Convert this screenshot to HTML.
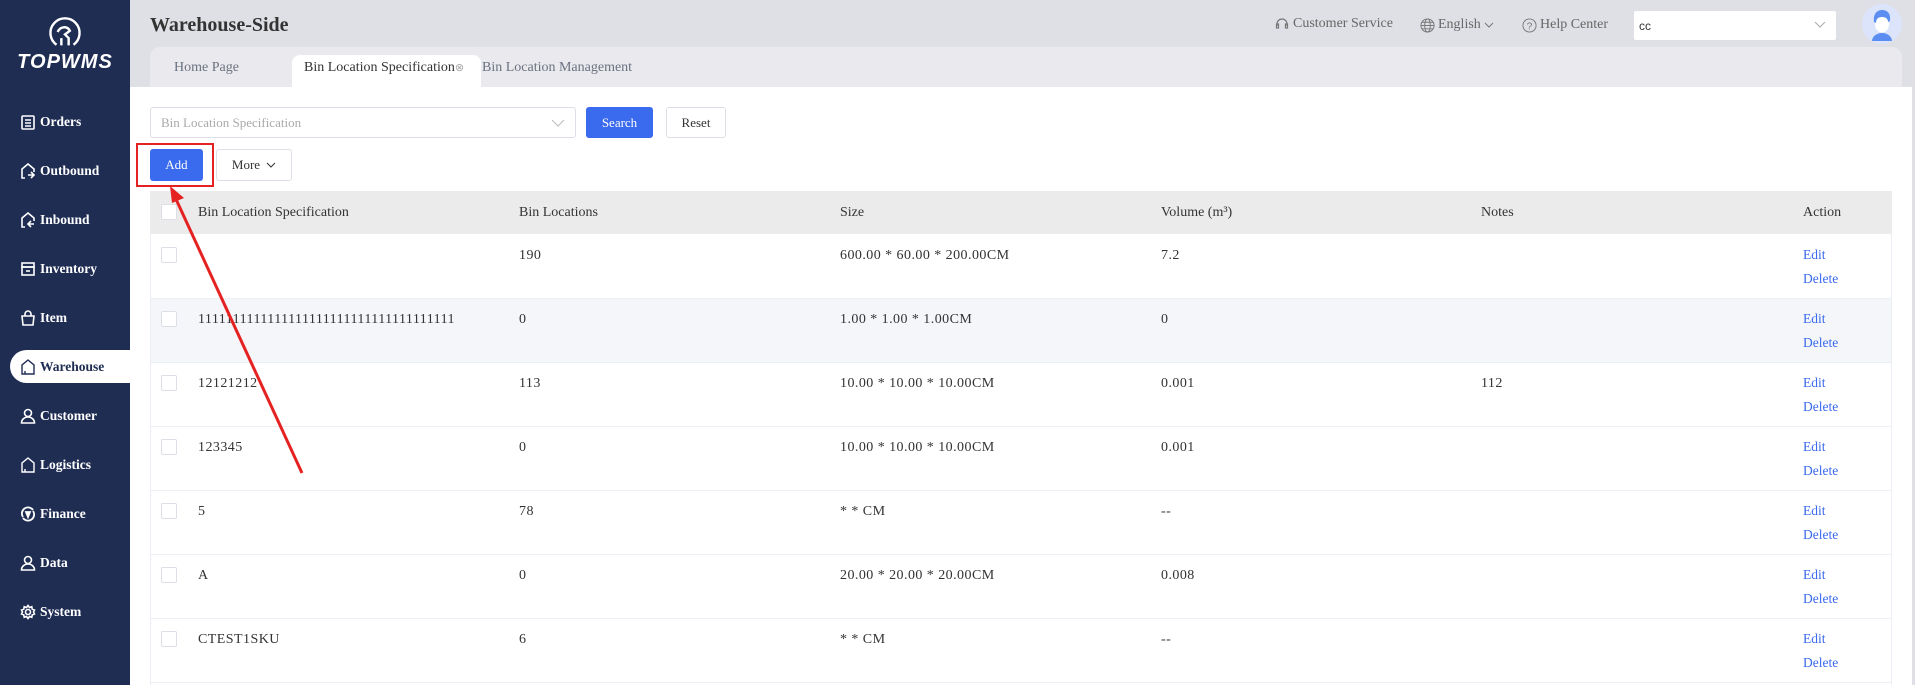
<!DOCTYPE html>
<html><head><meta charset="utf-8"><style>
*{margin:0;padding:0;box-sizing:border-box}
body{width:1915px;height:685px;overflow:hidden;background:#dfe0e6;font-family:"Liberation Serif",serif;font-size:14px;color:#333;position:relative}
.abs{position:absolute}
.side{left:0;top:0;width:130px;height:685px;background:#1f2d53}
.mi{position:absolute;left:20px;color:#fff;font-weight:bold;font-size:13.5px;display:flex;align-items:center;gap:4px;height:20px}
.mi svg{width:16px;height:16px}
.act{left:10px;width:120px;height:33px;background:#fff;border-radius:17px 0 0 17px;color:#1f2d53;padding-left:10px}
.tabbar{left:150px;top:47px;width:1752px;height:40px;background:#e9e9ee;border-radius:10px 10px 0 0}
.content{left:130px;top:87px;width:1782px;height:598px;background:#fff}
.btn{position:absolute;border-radius:3px;font-size:13px;display:flex;align-items:center;justify-content:center}
.th{left:150px;top:191px;width:1742px;height:43px;background:#ebebeb}
.cell{position:absolute;font-size:14px;color:#333}
.dc{letter-spacing:0.45px}
.cb{position:absolute;width:16px;height:16px;border:1px solid #dcdfe6;background:#fff;border-radius:2px}
.line{position:absolute;left:150px;width:1742px;height:1px;background:#ebeef5}
a{color:#3a6aed;text-decoration:none}
</style></head><body>
<div class="abs side">
  <svg class="abs" style="left:48px;top:15px" width="34" height="34" viewBox="0 0 28 28" fill="none" stroke="#fff" stroke-width="2"><path d="M7 24.5A12 12 0 1 1 21 24.5"/><path d="M8 14c2-5 8-5 10-1l-4 3 3 3v6M11 25v-6"/></svg>
  <div class="abs" style="left:0;width:130px;top:51px;text-align:center;color:#fff;font-family:'Liberation Sans',sans-serif;font-style:italic;font-weight:bold;font-size:20px;letter-spacing:1px">TOPWMS</div>
  <div class="mi" style="top:112px"><svg viewBox="0 0 16 16" fill="none" stroke="#fff" stroke-width="1.6"><rect x="2" y="2" width="12" height="13" rx="1"/><path d="M5 6h6M5 9h6M5 12h6"/></svg>Orders</div>
  <div class="mi" style="top:161px"><svg viewBox="0 0 16 16" fill="none" stroke="#fff" stroke-width="1.6"><path d="M5 15H2V6l6-5 6 5v3M8 12h6M11 9l3 3-3 3"/></svg>Outbound</div>
  <div class="mi" style="top:210px"><svg viewBox="0 0 16 16" fill="none" stroke="#fff" stroke-width="1.6"><path d="M5 15H2V6l6-5 6 5v3M14 12H8M11 9l-3 3 3 3"/></svg>Inbound</div>
  <div class="mi" style="top:259px"><svg viewBox="0 0 16 16" fill="none" stroke="#fff" stroke-width="1.6"><rect x="2" y="2" width="12" height="4"/><rect x="2" y="6" width="12" height="8"/><path d="M6 10h4"/></svg>Inventory</div>
  <div class="mi" style="top:308px"><svg viewBox="0 0 16 16" fill="none" stroke="#fff" stroke-width="1.6"><path d="M2 6h12l-1 9H3zM5 6V4a3 3 0 0 1 6 0v2"/></svg>Item</div>
  <div class="mi act" style="top:350px;height:33px"><svg viewBox="0 0 16 16" fill="none" stroke="#1f2d53" stroke-width="1.4"><path d="M2 15V6l6-5 6 5v9zM5 15v-3"/></svg>Warehouse</div>
  <div class="mi" style="top:406px"><svg viewBox="0 0 16 16" fill="none" stroke="#fff" stroke-width="1.6"><circle cx="8" cy="5" r="3.5"/><path d="M1.5 15a6.5 6 0 0 1 13 0z"/></svg>Customer</div>
  <div class="mi" style="top:455px"><svg viewBox="0 0 16 16" fill="none" stroke="#fff" stroke-width="1.4"><path d="M2 15V6l6-5 6 5v9zM5 15v-3"/></svg>Logistics</div>
  <div class="mi" style="top:504px"><svg viewBox="0 0 16 16" fill="none" stroke="#fff" stroke-width="1.8"><path d="M3 11A6 6 0 0 1 13 4M13 5A6 6 0 0 1 3 12"/><path d="M6 6h4l-2 5z" fill="#fff"/></svg>Finance</div>
  <div class="mi" style="top:553px"><svg viewBox="0 0 16 16" fill="none" stroke="#fff" stroke-width="1.6"><circle cx="8" cy="5" r="3.5"/><path d="M1.5 15a6.5 6 0 0 1 13 0z"/></svg>Data</div>
  <div class="mi" style="top:602px"><svg viewBox="0 0 16 16" fill="none" stroke="#fff" stroke-width="1.6"><circle cx="8" cy="8" r="2.5"/><path d="M8 1.5l1.5 2 2.3-.8.4 2.4 2.3.9-1 2 1 2-2.3.9-.4 2.4-2.3-.8-1.5 2-1.5-2-2.3.8-.4-2.4-2.3-.9 1-2-1-2 2.3-.9.4-2.4 2.3.8z"/></svg>System</div>
</div>
<div class="abs" style="left:150px;top:14px;font-size:20px;font-weight:bold;color:#333">Warehouse-Side</div>
<div class="abs" style="left:1275px;top:16px;color:#666;font-size:14px;display:flex;align-items:center;gap:4px"><svg width="14" height="14" viewBox="0 0 14 14" fill="none" stroke="#777" stroke-width="1.2"><path d="M2 9V7a5 5 0 0 1 10 0v2"/><rect x="1.5" y="7" width="2" height="4"/><rect x="10.5" y="7" width="2" height="4"/></svg>Customer Service</div>
<div class="abs" style="left:1420px;top:17px;color:#666;font-size:14px;display:flex;align-items:center;gap:3px"><svg width="15" height="15" viewBox="0 0 16 16" fill="none" stroke="#777" stroke-width="1"><circle cx="8" cy="8" r="7"/><ellipse cx="8" cy="8" rx="3" ry="7"/><path d="M1 8h14M2 4.5h12M2 11.5h12"/></svg>English<svg width="10" height="8" viewBox="0 0 10 8" fill="none" stroke="#777"><path d="M1 2l4 4 4-4"/></svg></div>
<div class="abs" style="left:1522px;top:17px;color:#666;font-size:14px;display:flex;align-items:center;gap:3px"><svg width="15" height="15" viewBox="0 0 16 16" fill="none" stroke="#777" stroke-width="1"><circle cx="8" cy="8" r="7"/><text x="8" y="12" font-size="11" text-anchor="middle" fill="#777" stroke="none" font-family="Liberation Sans">?</text></svg>Help Center</div>
<div class="abs" style="left:1634px;top:11px;width:202px;height:29px;background:#fff;border-radius:2px;font-family:'Liberation Sans',sans-serif;font-size:12px;padding:8px 5px;color:#333">cc<svg class="abs" style="right:10px;top:10px" width="12" height="8" viewBox="0 0 12 8" fill="none" stroke="#aaa"><path d="M1 1l5 5 5-5"/></svg></div>
<svg class="abs" style="left:1862px;top:4px" width="40" height="40" viewBox="0 0 40 40"><circle cx="20" cy="20" r="20" fill="#dbe4fb"/><path d="M10 37a10 8 0 0 1 20 0z" fill="#5b8ef0"/><ellipse cx="20" cy="20" rx="7" ry="8.5" fill="#fff"/><path d="M12 18c-1-8 3-12 8-12s9 3 8 11l-2 1c0-3-2-5-6-5s-6 2-6 6z" fill="#5b8ef0"/></svg>
<div class="abs tabbar"></div>
<div class="abs" style="left:174px;top:60px;color:#6b7280;font-size:14px">Home Page</div>
<div class="abs" style="left:292px;top:55px;width:189px;height:32px;background:#fff;border-radius:8px 8px 0 0"></div>
<div class="abs" style="left:304px;top:60px;color:#333;font-size:14px">Bin Location Specification<span style="color:#aaa;font-size:11px">⊗</span></div>
<div class="abs" style="left:482px;top:60px;color:#6b7280;font-size:14px">Bin Location Management</div>
<div class="abs content"></div>
<div class="abs" style="left:150px;top:107px;width:426px;height:31px;border:1px solid #dcdfe6;border-radius:3px;color:#aaa;font-size:13px;padding:7px 10px">Bin Location Specification<svg class="abs" style="right:10px;top:11px" width="14" height="8" viewBox="0 0 14 8" fill="none" stroke="#bbb"><path d="M1 1l6 6 6-6"/></svg></div>
<div class="btn" style="left:586px;top:107px;width:67px;height:31px;background:#3a6aed;color:#fff">Search</div>
<div class="btn" style="left:666px;top:107px;width:60px;height:31px;border:1px solid #dcdfe6;color:#333">Reset</div>
<div class="btn" style="left:150px;top:149px;width:53px;height:32px;background:#3a6aed;color:#fff">Add</div>
<div class="btn" style="left:216px;top:149px;width:76px;height:32px;border:1px solid #dcdfe6;color:#333;gap:6px">More <svg width="10" height="7" viewBox="0 0 10 7" fill="none" stroke="#333"><path d="M1 1l4 4 4-4"/></svg></div>
<div class="abs" style="left:136px;top:143px;width:78px;height:44px;border:2px solid #e52222"></div>
<div class="abs th"></div>
<div class="cb" style="left:161px;top:204px"></div>
<div class="cell" style="left:198px;top:205px">Bin Location Specification</div>
<div class="cell" style="left:519px;top:205px">Bin Locations</div>
<div class="cell" style="left:840px;top:205px">Size</div>
<div class="cell" style="left:1161px;top:205px">Volume (m³)</div>
<div class="cell" style="left:1481px;top:205px">Notes</div>
<div class="cell" style="left:1803px;top:205px">Action</div>
<div class="abs" style="left:150px;top:298px;width:1742px;height:64px;background:#f5f6fa"></div>
<div class="abs" style="left:150px;top:234px;width:1px;height:451px;background:#ebeef5"></div>
<div class="abs" style="left:1891px;top:234px;width:1px;height:451px;background:#ebeef5"></div>
<div id="rows"></div>
<script>
var d=[["","190","600.00 * 60.00 * 200.00CM","7.2",""],["1111111111111111111111111111111111111","0","1.00 * 1.00 * 1.00CM","0",""],["12121212","113","10.00 * 10.00 * 10.00CM","0.001","112"],["123345","0","10.00 * 10.00 * 10.00CM","0.001",""],["5","78","* * CM","--",""],["A","0","20.00 * 20.00 * 20.00CM","0.008",""],["CTEST1SKU","6","* * CM","--",""]];
var xs=[198,519,840,1161,1481],h="";
d.forEach(function(r,i){var t=234+i*64;h+='<div class="cb" style="left:161px;top:'+(t+13)+'px"></div>';
r.forEach(function(c,j){h+='<div class="cell dc" style="left:'+xs[j]+'px;top:'+(t+14)+'px">'+c+'</div>'});
h+='<div class="cell" style="left:1803px;top:'+(t+13)+'px;font-size:13.5px"><a>Edit</a></div><div class="cell" style="left:1803px;top:'+(t+37)+'px;font-size:13.5px"><a>Delete</a></div>';
h+='<div class="line" style="top:'+(t+64)+'px"></div>'});
document.getElementById("rows").innerHTML=h;
</script>
<svg class="abs" style="left:0;top:0" width="1915" height="685"><line x1="302" y1="473" x2="175" y2="197" stroke="#e52222" stroke-width="3"/><path d="M170 186l14 12-12 5z" fill="#e52222"/></svg>
</body></html>
